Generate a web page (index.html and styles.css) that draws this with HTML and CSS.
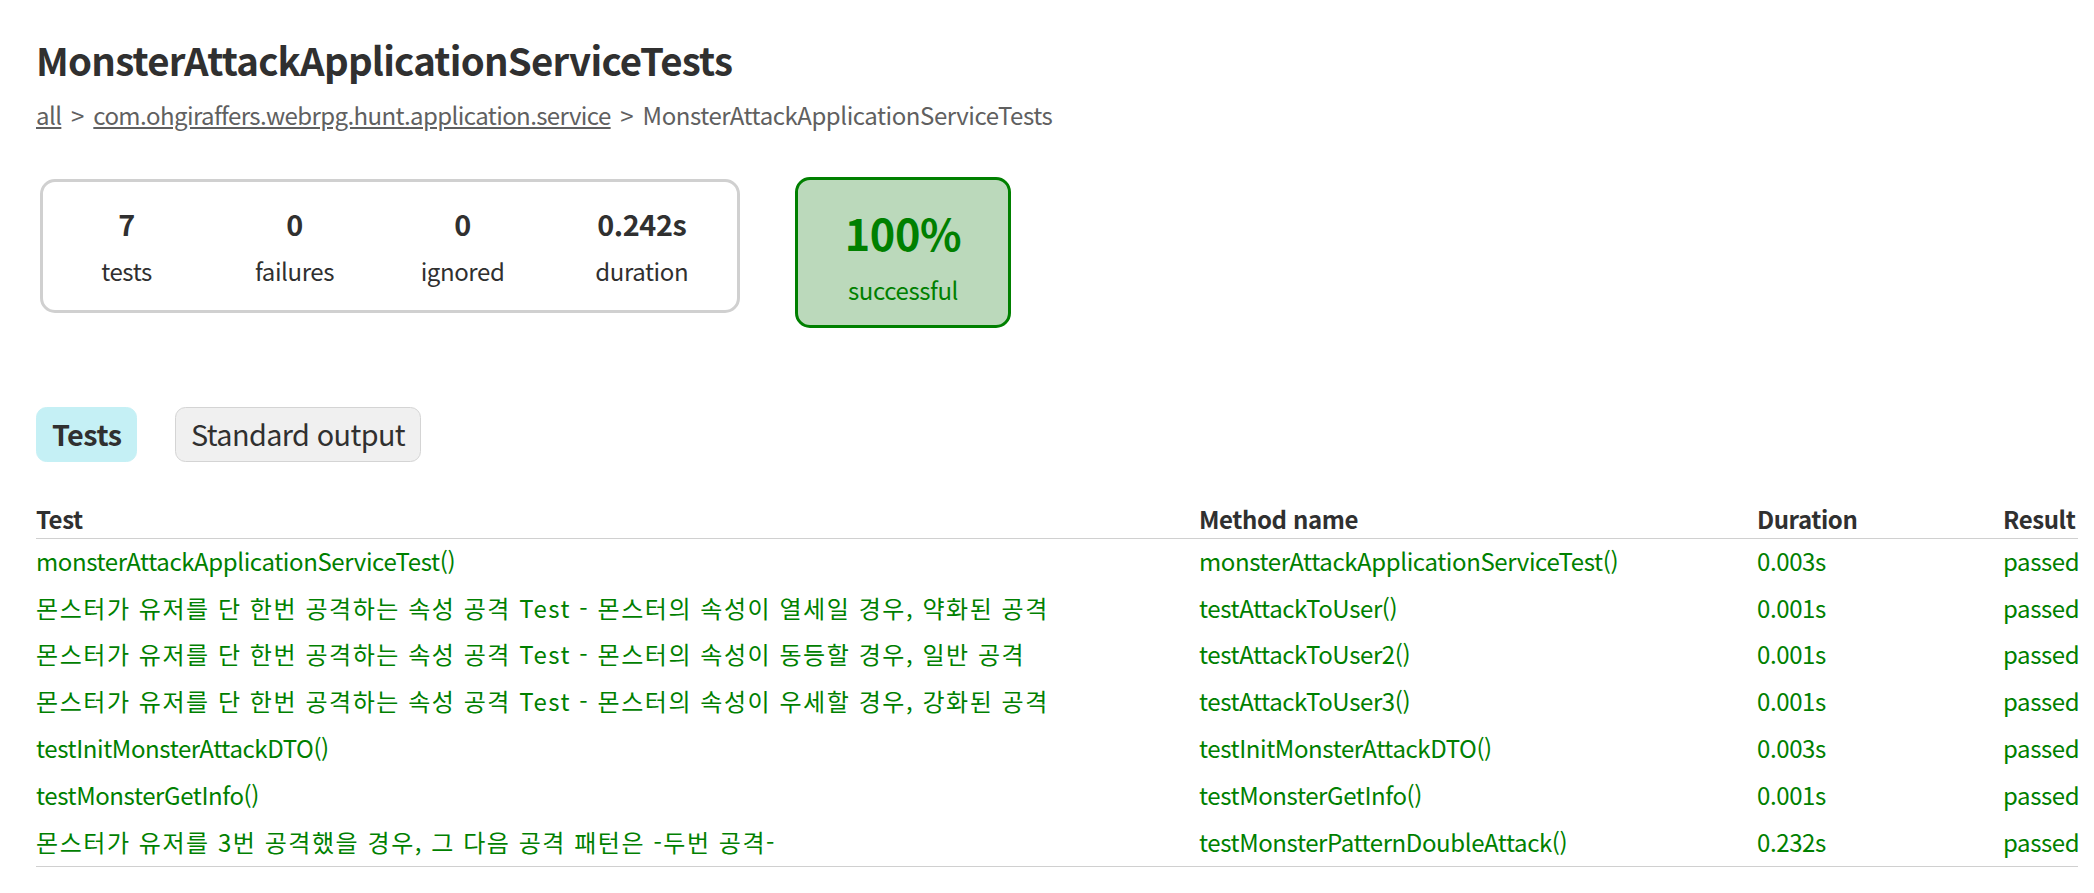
FILE: index.html
```html
<!DOCTYPE html>
<html lang="ko">
<head>
<meta charset="utf-8">
<title>Test results - MonsterAttackApplicationServiceTests</title>
<link rel="stylesheet" href="styles.css">
</head>
<body>
<div class="content">
  <h1 class="title">MonsterAttackApplicationServiceTests</h1>
  <div class="breadcrumbs">
    <a href="#">all</a> &gt; <a href="#">com.ohgiraffers.webrpg.hunt.application.service</a> &gt; <span class="crumb-current">MonsterAttackApplicationServiceTests</span>
  </div>

  <div class="summary">
    <div class="summary-group">
      <div class="info-box">
        <div class="counter">7</div>
        <p class="label">tests</p>
      </div>
      <div class="info-box">
        <div class="counter">0</div>
        <p class="label">failures</p>
      </div>
      <div class="info-box">
        <div class="counter">0</div>
        <p class="label">ignored</p>
      </div>
      <div class="info-box info-duration">
        <div class="counter">0.242s</div>
        <p class="label">duration</p>
      </div>
    </div>
    <div class="success-rate">
      <div class="percent">100%</div>
      <p class="label">successful</p>
    </div>
  </div>

  <ul class="tab-links">
    <li class="tab tab-selected"><a href="#"><span class="tab-title">Tests</span></a></li>
    <li class="tab"><a href="#">Standard output</a></li>
  </ul>

  <table class="tests">
    <colgroup>
      <col class="c-test">
      <col class="c-method">
      <col class="c-duration">
      <col class="c-result">
    </colgroup>
    <thead>
      <tr>
        <th>Test</th>
        <th>Method name</th>
        <th>Duration</th>
        <th>Result</th>
      </tr>
    </thead>
    <tbody>
      <tr>
        <td>monsterAttackApplicationServiceTest()</td>
        <td>monsterAttackApplicationServiceTest()</td>
        <td>0.003s</td>
        <td>passed</td>
      </tr>
      <tr>
        <td class="ko">몬스터가 유저를 단 한번 공격하는 속성 공격 Test - 몬스터의 속성이 열세일 경우, 약화된 공격</td>
        <td>testAttackToUser()</td>
        <td>0.001s</td>
        <td>passed</td>
      </tr>
      <tr>
        <td class="ko">몬스터가 유저를 단 한번 공격하는 속성 공격 Test - 몬스터의 속성이 동등할 경우, 일반 공격</td>
        <td>testAttackToUser2()</td>
        <td>0.001s</td>
        <td>passed</td>
      </tr>
      <tr>
        <td class="ko">몬스터가 유저를 단 한번 공격하는 속성 공격 Test - 몬스터의 속성이 우세할 경우, 강화된 공격</td>
        <td>testAttackToUser3()</td>
        <td>0.001s</td>
        <td>passed</td>
      </tr>
      <tr>
        <td>testInitMonsterAttackDTO()</td>
        <td>testInitMonsterAttackDTO()</td>
        <td>0.003s</td>
        <td>passed</td>
      </tr>
      <tr>
        <td>testMonsterGetInfo()</td>
        <td>testMonsterGetInfo()</td>
        <td>0.001s</td>
        <td>passed</td>
      </tr>
      <tr>
        <td class="ko">몬스터가 유저를 3번 공격했을 경우, 그 다음 공격 패턴은 -두번 공격-</td>
        <td>testMonsterPatternDoubleAttack()</td>
        <td>0.232s</td>
        <td>passed</td>
      </tr>
    </tbody>
  </table>
</div>
</body>
</html>
```

FILE: styles.css
```css
html, body {
  margin: 0;
  padding: 0;
  background: #ffffff;
}

body {
  font-family: "Noto Sans CJK KR", "Noto Sans", sans-serif;
  font-size: 24px;
  line-height: 34px;
  letter-spacing: -0.4px;
  color: #303030;
}

a, a:visited {
  color: #303030;
}

.content {
  padding: 0 16px 0 36px;
}

.title {
  margin: 36px 0 15.5px;
  font-size: 38.4px;
  line-height: 46px;
  font-weight: bold;
  letter-spacing: -0.75px;
  white-space: nowrap;
}

.breadcrumbs,
.breadcrumbs a,
.breadcrumbs a:visited {
  color: #606060;
}

.breadcrumbs {
  white-space: nowrap;
  letter-spacing: -0.6px;
  word-spacing: 3.5px;
}

.crumb-current {
  letter-spacing: -0.45px;
}

/* summary */
.summary {
  display: flex;
  align-items: flex-start;
  margin: 47px 0 0 3.5px;
}

.summary-group {
  display: flex;
  border: 3px solid #d0d0d0;
  border-radius: 15px;
}

.info-box {
  width: 168px;
  padding: 25.5px 0 22px;
  text-align: center;
}

.info-box.info-duration {
  width: 190.5px;
}

.counter {
  font-size: 28.8px;
  line-height: 34px;
  font-weight: bold;
  margin-bottom: 12.6px;
}

.label {
  margin: 0;
}

.success-rate {
  width: 210px;
  margin-left: 55px;
  margin-top: -2px;
  padding: 27px 0 18px;
  text-align: center;
  color: #008000;
  background-color: #bbd9bb;
  border: 3px solid #008000;
  border-radius: 15px;
}

.percent {
  font-size: 43.2px;
  line-height: 50px;
  font-weight: bold;
  margin-bottom: 16px;
}

/* tabs */
.tab-links {
  display: flex;
  list-style: none;
  margin: 79px 0 0;
  padding: 0;
}

.tab {
  margin-right: 37.5px;
  padding: 7.5px 15px;
  border: 1px solid #d4d4d4;
  border-radius: 10.5px;
  background-color: #f0f0f0;
}

.tab a {
  display: block;
  font-size: 28.8px;
  line-height: 38px;
  text-decoration: none;
  white-space: nowrap;
  letter-spacing: -0.6px;
}

.tab.tab-selected {
  background-color: #c5f0f5;
  border-color: #c5f0f5;
}

.tab.tab-selected a {
  letter-spacing: -0.5px;
}

.tab-title {
  font-weight: bold;
}

/* table */
.tests {
  margin-top: 40px;
  width: 2042px;
  table-layout: fixed;
  border-collapse: collapse;
  border-bottom: 1px solid #d0d0d0;
}

.c-test { width: 1019px; }
.c-method { width: 558px; }
.c-duration { width: 246px; }
.c-result { width: 219px; }

.tests th {
  text-align: left;
  font-weight: bold;
  white-space: nowrap;
  padding: 0 0 2px 144px;
  border-bottom: 1px solid #d0d0d0;
}

.tests td {
  white-space: nowrap;
  vertical-align: top;
  color: #008000;
  padding: 5.3px 0 7.5px 144px;
}

.tests td.ko {
  letter-spacing: 1.55px;
}

.tests th:first-child,
.tests td:first-child {
  padding-left: 0;
}
```
